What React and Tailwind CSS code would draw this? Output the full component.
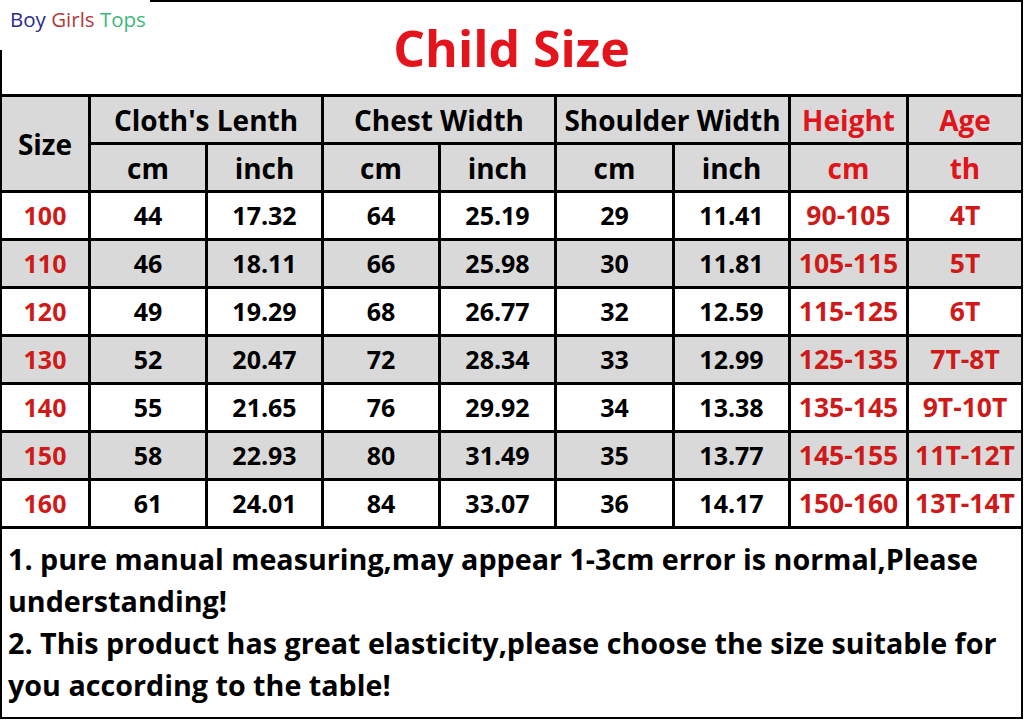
import React from "react";

const rows = [
  ["100", "44", "17.32", "64", "25.19", "29", "11.41", "90-105", "4T"],
  ["110", "46", "18.11", "66", "25.98", "30", "11.81", "105-115", "5T"],
  ["120", "49", "19.29", "68", "26.77", "32", "12.59", "115-125", "6T"],
  ["130", "52", "20.47", "72", "28.34", "33", "12.99", "125-135", "7T-8T"],
  ["140", "55", "21.65", "76", "29.92", "34", "13.38", "135-145", "9T-10T"],
  ["150", "58", "22.93", "80", "31.49", "35", "13.77", "145-155", "11T-12T"],
  ["160", "61", "24.01", "84", "33.07", "36", "14.17", "150-160", "13T-14T"],
];

export default function App() {
  const font = { fontFamily: '"Open Sans", "Noto Sans", sans-serif' };
  return (
    <div className="relative w-[1024px] h-[720px] bg-white" style={font}>
      <div className="w-[1023px] h-[719px] border-2 border-black flex flex-col">
        <div className="h-[92px] flex items-center justify-center">
          <span className="text-[50px] font-bold text-[#e3141b] leading-none">Child Size</span>
        </div>
        <div className="grid grid-cols-[86px_114px_113px_114px_113px_115px_113px_115px_1fr] auto-rows-[45px] gap-[3px] bg-black border-y-[3px] border-black font-bold">
          <div className="row-span-2 bg-[#d9d9d9] flex items-center justify-center text-[28px] text-black">Size</div>
          <div className="col-span-2 bg-[#d9d9d9] flex items-center justify-center text-[28px] text-black">Cloth's Lenth</div>
          <div className="col-span-2 bg-[#d9d9d9] flex items-center justify-center text-[28px] text-black">Chest Width</div>
          <div className="col-span-2 bg-[#d9d9d9] flex items-center justify-center text-[28px] text-black whitespace-nowrap">Shoulder Width</div>
          <div className="bg-[#d9d9d9] flex items-center justify-center text-[28px] text-[#e0141b]">Height</div>
          <div className="bg-[#d9d9d9] flex items-center justify-center text-[28px] text-[#e0141b]">Age</div>
          {["cm", "inch", "cm", "inch", "cm", "inch"].map((t, i) => (
            <div key={i} className="bg-[#d9d9d9] flex items-center justify-center text-[28px] text-black">{t}</div>
          ))}
          <div className="bg-[#d9d9d9] flex items-center justify-center text-[28px] text-[#e0141b]">cm</div>
          <div className="bg-[#d9d9d9] flex items-center justify-center text-[28px] text-[#e0141b]">th</div>
          {rows.map((r, ri) =>
            r.map((c, ci) => {
              const bg = ri % 2 === 1 ? "bg-[#d9d9d9]" : "bg-white";
              const red = ci === 0 || ci >= 7;
              const size = ci >= 7 ? "text-[26.5px]" : "text-[25px]";
              return (
                <div
                  key={ri + "-" + ci}
                  className={`${bg} flex items-center justify-center ${size} whitespace-nowrap ${red ? "text-[#cf1a1a]" : "text-black"}`}
                >
                  {c}
                </div>
              );
            })
          )}
        </div>
        <div className="flex-1 px-[6px] pt-[9px] text-[28.7px] leading-[42px] font-bold text-black">
          <p>1. pure manual measuring,may appear 1-3cm error is normal,Please understanding!</p>
          <p>2. This product has great elasticity,please choose the size suitable for you according to the table!</p>
        </div>
      </div>
      <div className="absolute left-0 top-0 w-[150px] h-[50px] bg-white pl-[10px] pt-[6px] text-[20.5px] leading-[26px]">
        <span className="text-[#2b2b8c]">Boy</span> <span className="text-[#b23a3a]">Girls</span>{" "}
        <span className="text-[#3cb878]">Tops</span>
      </div>
    </div>
  );
}
